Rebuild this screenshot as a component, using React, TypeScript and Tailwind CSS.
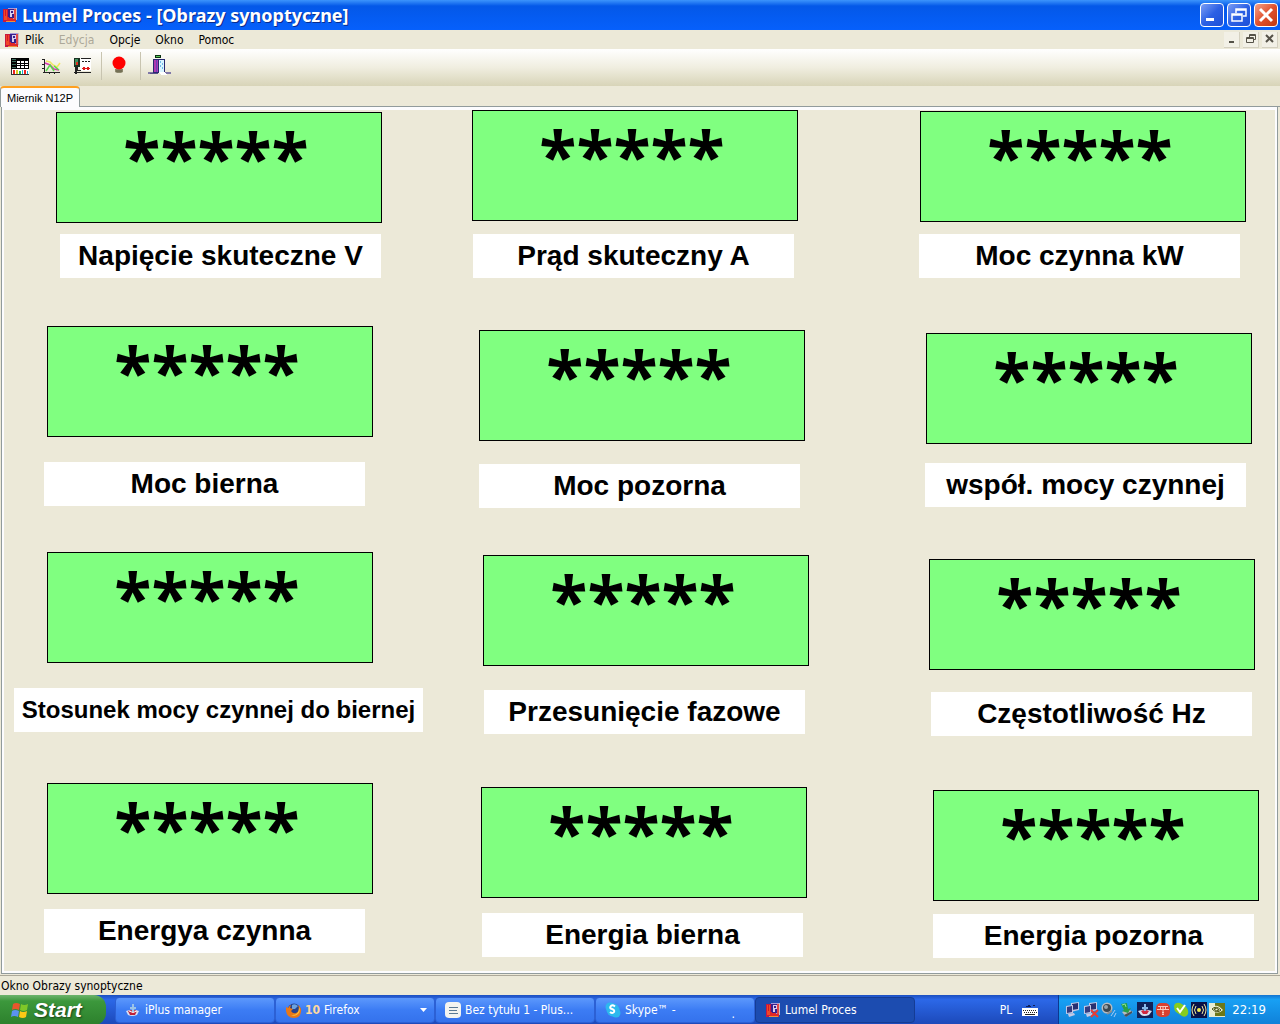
import type { ReactNode } from 'react';

interface Meter {
  id: string;
  label: string;
  box: [number, number];
  caption: [number, number];
  wide?: boolean;
}

// positions on the synoptic canvas, in pixels
const meters: Meter[] = [
  { id: 'u', label: 'Napięcie skuteczne V', box: [52, 2], caption: [56, 124] },
  { id: 'i', label: 'Prąd skuteczny A', box: [468, 0], caption: [469, 124] },
  { id: 'p', label: 'Moc czynna kW', box: [916, 1], caption: [915, 124] },
  { id: 'q', label: 'Moc bierna', box: [43, 216], caption: [40, 352] },
  { id: 's', label: 'Moc pozorna', box: [475, 220], caption: [475, 354] },
  { id: 'pf', label: 'współ. mocy czynnej', box: [922, 223], caption: [921, 353] },
  { id: 'tg', label: 'Stosunek mocy czynnej do biernej', box: [43, 442], caption: [10, 578], wide: true },
  { id: 'fi', label: 'Przesunięcie fazowe', box: [479, 445], caption: [480, 580] },
  { id: 'f', label: 'Częstotliwość Hz', box: [925, 449], caption: [927, 582] },
  { id: 'ep', label: 'Energya czynna', box: [43, 673], caption: [40, 799] },
  { id: 'eq', label: 'Energia bierna', box: [477, 677], caption: [478, 803] },
  { id: 'es', label: 'Energia pozorna', box: [929, 680], caption: [929, 804] },
];

function LumelIcon() {
  return (
    <svg width="16" height="18" viewBox="0 0 16 18" shapeRendering="crispEdges" aria-hidden="true">
      <path d="M1 3h5v13H1z" fill="#c81840" />
      <path d="M2 4h3v10H2z" fill="#f04828" />
      <path d="M3 4h1v6H3z" fill="#d01828" />
      <path d="M6 2h8v12H6z" fill="#a898d8" />
      <path d="M6 3h6v9H6z" fill="#38208c" />
      <path d="M8 4h4v4h-2v3H8z" fill="#d8d0f0" />
      <path d="M9 5h2v2H9z" fill="#38208c" />
      <path d="M5 11h2v1h4v1h3v3H5z" fill="#e02828" />
      <path d="M4 15h9v1H4z" fill="#f09038" />
      <path d="M12 3h2v10h-2z" fill="#e04848" />
      <path d="M14 2h1v12h-1z" fill="#c8c0c8" />
    </svg>
  );
}

function TableIcon() {
  return (
    <svg width="20" height="20" viewBox="0 0 20 20" shapeRendering="crispEdges">
      <path d="M1 2h18v11H1z" fill="#000" />
      <path d="M2 3h4v1H2zM2 5h4v1H2zM2 8h4v1H2zM2 11h4v1H2z" fill="#386858" />
      <path d="M7 5h3v2H7zM11 5h3v2h-3zM15 5h3v2h-3zM7 8h3v1H7zM11 8h3v1h-3zM15 8h3v1h-3zM7 10h3v2H7zM11 10h3v2h-3zM15 10h3v2h-3z" fill="#fff" />
      <path d="M1 13h18v5H1z" fill="#fff" />
      <path d="M1 13h1v5H1zM1 18h18v1H1z" fill="#333" />
      <path d="M3 14h2v4H3zM14 14h2v4h-2z" fill="#e22" />
      <path d="M6 14h2v4H6z" fill="#dc2" />
      <path d="M9 15h2v3H9z" fill="#2b4" />
      <path d="M12 14h1v4h-1zM17 15h1v3h-1z" fill="#2ac" />
    </svg>
  );
}

function ChartIcon() {
  return (
    <svg width="20" height="20" viewBox="0 0 20 20" fill="none">
      <path d="M3.500 3v14M2 16.500h17M1 3.500h2M1 8.500h2M1 12.500h2M8.500 17v1M13.500 17v1" stroke="#222" />
      <path d="M5 5l4 1 3 3 4 2 3-4" stroke="#f0e860" strokeWidth="1.500" />
      <path d="M4 7l5 2 4 4 5 1" stroke="#d838b0" strokeWidth="1.500" />
      <path d="M5 15l4-6 4 6M13 10l5 4" stroke="#58d848" strokeWidth="1.500" />
    </svg>
  );
}

function DeviceIcon() {
  return (
    <svg width="20" height="20" viewBox="0 0 20 20" shapeRendering="crispEdges">
      <path d="M2 2h6v9H2z" fill="#183020" />
      <path d="M3 3h3v6H3z" fill="#409060" />
      <path d="M4 6h2v3H4z" fill="#e03020" />
      <path d="M8 3h11v12H8z" fill="#fff" />
      <path d="M9 2h10v1H9zM10 5h2v1h-2zM13 5h2v1h-2zM16 5h2v1h-2z" fill="#222" />
      <path d="M3 11h3v3h3v1H3zM2 16h17v1H2zM3 15h2v3H3z" fill="#222" />
      <path d="M10 12h1v-1h2v1h2v-1h2v1h1v1h-1v1h-2v-1h-2v1h-2v-1h-1z" fill="#e01818" />
    </svg>
  );
}

function BulbIcon() {
  return (
    <svg width="20" height="20" viewBox="0 0 20 20">
      <path d="M5 13h8v3l-2 1H7l-2-1z" fill="#8c886c" />
      <path d="M6 15h6" stroke="#5c5840" />
      <circle cx="9" cy="7" r="6.500" fill="#f00" />
    </svg>
  );
}

function ExitIcon() {
  return (
    <svg width="24" height="22" viewBox="0 0 24 22" shapeRendering="crispEdges">
      <path d="M0 17h5v2H0zM17 17h6v2h-6z" fill="#8078a8" />
      <path d="M5 4h12v14H5z" fill="#282870" />
      <path d="M7 0h6v3H7z" fill="#0a3010" />
      <path d="M8 1h4v1H8z" fill="#58c858" />
      <path d="M6 5h4v12H6z" fill="#b038b0" />
      <path d="M8 5h1v12H8z" fill="#6840b8" />
      <path d="M11 5h5v13h-5z" fill="#d8f4ff" />
      <path d="M12 6h1v2h-1zM14 8h1v2h-1zM12 10h1v2h-1zM14 12h1v2h-1z" fill="#70b8e8" />
      <path d="M11 17h5l4 3h-7z" fill="#fff" />
      <path d="M2 18h8v1H2z" fill="#585088" />
    </svg>
  );
}

function WindowsLogo() {
  return (
    <svg width="20" height="20" viewBox="0 0 20 20" aria-hidden="true">
      <path d="M3 4q3-2 7 0l-1 6q-4-2-7 0z" fill="#e8562c" />
      <path d="M11 4q3 2 7 0l-1 6q-3 2-7 0z" fill="#7fc828" />
      <path d="M2 11q3-2 7 0l-1 6q-4-2-7 0z" fill="#5b92f0" />
      <path d="M10 11q3 2 7 0l-1 6q-3 2-7 0z" fill="#fbc816" />
    </svg>
  );
}

function PlusManagerIcon() {
  return (
    <svg width="16" height="16" viewBox="0 0 16 16" aria-hidden="true">
      <path d="M1 9q7-3 13 0l-2 4q-5 2-9 0z" fill="#d8e0f4" />
      <path d="M3 9q5-2 9 0l-2 4H5z" fill="#c02038" />
      <path d="M7 2h2v3h2v2H9v3H7V7H5V5h2z" fill="#9cc4e8" />
      <path d="M4 9q4 3 8 0" stroke="#fff" fill="none" />
    </svg>
  );
}

function FirefoxIcon() {
  return (
    <svg width="17" height="17" viewBox="0 0 17 17" aria-hidden="true">
      <circle cx="9" cy="8" r="6.500" fill="#27428c" />
      <path d="M7 3q3-2 6 1l-3 3-3 0z" fill="#6ba2e0" />
      <path d="M1 5l2 1q1-2 3-3L5 6l3 1-2 2q2 3 5 2 3-1 3-5l-1-3q4 3 3 7-1 6-7 6-7 0-8-7z" fill="#e87818" />
      <path d="M14 5q2 4-1 7-3 3-7 1 8 1 8-8z" fill="#fbc43c" />
    </svg>
  );
}

function DocumentIcon() {
  return (
    <svg width="16" height="16" viewBox="0 0 16 16" aria-hidden="true">
      <rect x="0" y="0" width="16" height="16" rx="4" fill="#f4f4f0" />
      <path d="M4 5.500h9M4 8.500h8M4 11.500h9" stroke="#5b7a94" />
    </svg>
  );
}

function SkypeIcon() {
  return (
    <svg width="16" height="16" viewBox="0 0 16 16" aria-hidden="true">
      <circle cx="5" cy="5" r="4.500" fill="#2db8ee" />
      <circle cx="11" cy="11" r="4.500" fill="#2db8ee" />
      <circle cx="8" cy="8" r="6.500" fill="#2db8ee" />
      <path d="M10 4.500Q7 2 5.500 4.500q-1 2 1.500 2.500 3 1 2 3-1.500 2-4 0" fill="none" stroke="#fff" strokeWidth="2" />
    </svg>
  );
}

function Computers({ crossed }: { crossed?: boolean }) {
  return (
    <svg width="16" height="16" viewBox="0 0 16 16" aria-hidden="true">
      <path d="M6 1l8-1v8l-8 2z" fill="#c4c8e4" />
      <path d="M7 2l6-1v6l-6 1z" fill="#283070" />
      <path d="M1 4l7-1v8l-7 1zM3 12l6-1 1 2-6 2z" fill="#c4c8e4" />
      <path d="M2 5l5-1v6l-5 1z" fill="#343c80" />
      {crossed && <path d="M8 8l7 7M15 8l-7 7" stroke="#e83c34" strokeWidth="2" />}
    </svg>
  );
}

function TrayIcons() {
  return (
    <>
      <Computers />
      <Computers crossed />
      <svg width="16" height="16" viewBox="0 0 16 16">
        <circle cx="6" cy="6" r="5.500" fill="#b8bcc0" />
        <circle cx="6" cy="6" r="4" fill="#3c4850" />
        <circle cx="5" cy="5" r="2" fill="#98a4ac" />
        <path d="M6 12l5-3" stroke="#888f94" strokeWidth="2" />
        <path d="M10 14l4-6M13 15l2-4" stroke="#a8ccf4" />
      </svg>
      <svg width="16" height="16" viewBox="0 0 16 16">
        <path d="M3 10l6-3 5 3-7 5z" fill="#b8bcc0" />
        <path d="M5 13l8-4v2l-6 4z" fill="#485058" />
        <path d="M2 2l6-1 1 6 3-1-3 5-6-2 2-1z" fill="#28a048" />
        <path d="M3 3l3-1 1 3" stroke="#90e090" fill="none" />
      </svg>
      <svg width="16" height="16" viewBox="0 0 16 16">
        <path d="M0 0h16v16H0z" fill="#102058" />
        <path d="M1 9q7-3 14 0l-3 4q-5 2-8 0z" fill="#d8e0f0" />
        <path d="M4 9q4-2 8 0l-2 3H6z" fill="#d02840" />
        <path d="M7 2h2v3h2v2H9v2H7V7H5V5h2z" fill="#88b8e8" />
      </svg>
      <svg width="16" height="16" viewBox="0 0 16 16">
        <rect x="1" y="1" width="14" height="14" rx="5" fill="#d84030" />
        <path d="M3 4.500h10M2 7.500h12M7 10.500h2M7 12.500h2M5.500 4v4M8 4v9M10.500 4v4" stroke="#f8c8bc" />
      </svg>
      <svg width="16" height="16" viewBox="0 0 16 16">
        <path d="M1 4q1-4 6-3l5 3q4 3 3 8-2 4-6 2L3 10Q1 8 1 4z" fill="#88cc20" />
        <path d="M4 6l3 4 5-7" stroke="#fff" strokeWidth="2" fill="none" />
      </svg>
      <svg width="16" height="16" viewBox="0 0 16 16">
        <path d="M0 0h16v16H0z" fill="#081048" />
        <circle cx="8" cy="8" r="2" fill="#f4ec50" />
        <path d="M5 4Q2 8 5 12M11 4q3 4 0 8M3 2q-4 6 0 12M13 2q4 6 0 12" stroke="#f0e8a0" fill="none" />
      </svg>
      <svg width="16" height="16" viewBox="0 0 16 16">
        <path d="M0 1h16v14H0z" fill="#e8ecd0" />
        <path d="M6 1h10v13H6z" fill="#6c7818" />
        <path d="M1 7q6-7 13 1-6 6-13-1z" fill="#f0f4d8" />
        <path d="M3 7q4-4 9 1-4 4-9-1zM5 7q3-2 5 1-3 2-5-1z" fill="none" stroke="#485010" />
      </svg>
    </>
  );
}

const glyphs: Record<string, ReactNode> = {
  min: <path d="M2 12.500h8" strokeWidth="3" />,
  restore: <path d="M5 6V2h10v7h-3M5 3h10M1 8h10M1 7h10v7H1z" />,
  close: <path d="M2 2l12 12M14 2L2 14" strokeWidth="3" />,
};

function CaptionButton({ kind, label }: { kind: string; label: string }) {
  return (
    <button
      aria-label={label}
      className={`w-6 h-6 rounded border border-white flex items-center justify-center ${
        kind === 'close'
          ? 'bg-linear-to-br from-[#f0a088] via-[#e0502c] to-[#c03810]'
          : 'bg-linear-to-br from-[#7c9cf4] via-[#2c60e4] to-[#1c50d8]'
      }`}
    >
      <svg width="16" height="16" viewBox="0 0 16 16" fill="none" stroke="#fff" strokeWidth="1.500">{glyphs[kind]}</svg>
    </button>
  );
}

function ChildButton({ label, children }: { label: string; children: ReactNode }) {
  return (
    <button aria-label={label} className="w-4 h-4 bg-[#f2f0e6] border-r border-b border-[#d4d0c0] flex items-center justify-center">
      <svg width="12" height="12" viewBox="0 0 12 12" fill="none" stroke="#555248">{children}</svg>
    </button>
  );
}

function Task({ icon, active, children }: { icon: ReactNode; active?: boolean; children: ReactNode }) {
  return (
    <button
      className={`flex-1 min-w-0 max-w-40 h-[26px] px-[7px] flex items-center gap-0.5 rounded-sm border text-left whitespace-nowrap ${
        active
          ? 'bg-[#1c4cb0] border-[#153c94]'
          : 'bg-linear-to-b from-[#5c98fc] via-[#3c7cf4] to-[#3472ec] border-[#2c60d4]'
      }`}
    >
      <span className="shrink-0 w-5 flex justify-center">{icon}</span>
      {children}
    </button>
  );
}

export default function App() {
  return (
    <div className="min-h-screen flex flex-col bg-[#ece9d8] text-black text-[12px] leading-4 font-['DejaVu_Sans_Condensed','Noto_Sans',sans-serif]">
      {/* Title bar */}
      <header className="h-[30px] shrink-0 flex items-center gap-1 pl-0.5 pr-0.5 bg-linear-to-b from-[#3c94fc] via-[#0458e8] via-20% to-[#0660fc]">
        <LumelIcon />
        <h1 className="flex-1 text-white text-[18px] leading-6 font-bold font-['Noto_Sans',sans-serif] [text-shadow:1px_1px_#0a2c8c]">
          Lumel Proces - [Obrazy synoptyczne]
        </h1>
        <div className="flex gap-[3px]">
          <CaptionButton kind="min" label="Minimalizuj" />
          <CaptionButton kind="restore" label="Przywróć" />
          <CaptionButton kind="close" label="Zamknij" />
        </div>
      </header>

      {/* Menu */}
      <nav className="h-[19px] shrink-0 flex items-center pl-1 pr-0.5">
        <LumelIcon />
        <div className="flex-1 flex gap-[15px] pl-[5px]">
          <button>Plik</button>
          <button disabled className="text-[#aca899]">Edycja</button>
          <button>Opcje</button>
          <button>Okno</button>
          <button>Pomoc</button>
        </div>
        <div className="flex gap-[3px]">
          <ChildButton label="Minimalizuj okno"><path d="M3 9h5" strokeWidth="2" /></ChildButton>
          <ChildButton label="Przywróć okno"><path d="M4.500 4V1.500h6v5H9M4 2.500h6M1.500 4.500h7v5h-7zM1 5.500h7" /></ChildButton>
          <ChildButton label="Zamknij okno"><path d="M2 2l7 7M9 2L2 9" strokeWidth="2" /></ChildButton>
        </div>
      </nav>

      {/* Toolbar */}
      <div className="h-[37px] shrink-0 flex items-center pl-[10px] pb-1 bg-linear-to-b from-white via-[#f0eee0] to-[#d8d4b8]">
        <div className="flex gap-[11px] pr-[9px]">
          <button aria-label="Tabela"><TableIcon /></button>
          <button aria-label="Wykres"><ChartIcon /></button>
          <button aria-label="Urządzenia"><DeviceIcon /></button>
        </div>
        <div className="h-7 border-l border-[#c8c4b0] pl-2 pr-[10px] flex items-center">
          <button aria-label="Alarm"><BulbIcon /></button>
        </div>
        <div className="h-7 border-l border-[#c8c4b0] px-[7px] flex items-center">
          <button aria-label="Wyjście"><ExitIcon /></button>
        </div>
      </div>

      {/* Tabs */}
      <div className="h-[21px] shrink-0 flex items-stretch">
        <button className="w-20 border-x border-[#919b9c] border-t-2 border-t-[#ffa020] rounded-t-sm bg-[#fcfcfe] text-[11px] whitespace-nowrap font-['Liberation_Sans',sans-serif]">
          Miernik N12P
        </button>
        <div className="flex-1 border-b border-[#919b9c]" />
      </div>

      {/* Synoptic canvas */}
      <main className="flex-1 flex ml-px mr-0.5 border-l border-r border-b border-[#919b9c]">
        <div className="relative flex-1 min-h-[866px] border-l-2 border-t-3 border-r-2 border-b-2 border-[#fcfcfe] overflow-hidden font-['Liberation_Sans',Arial,sans-serif] font-bold text-center">
          {meters.map(m => (
            <div key={m.id}>
              <output
                aria-labelledby={m.id}
                className="absolute w-[326px] h-[111px] bg-[#80ff80] border border-black text-[68px] leading-[88px] pr-1.5 font-['Open_Sans',sans-serif]"
                style={{ left: m.box[0], top: m.box[1] }}
              >
                *****
              </output>
              <p
                id={m.id}
                className={`absolute h-11 leading-11 bg-white whitespace-nowrap ${m.wide ? 'w-[409px] text-[24px]' : 'w-[321px] text-[28px]'}`}
                style={{ left: m.caption[0], top: m.caption[1] }}
              >
                {m.label}
              </p>
            </div>
          ))}
        </div>
      </main>

      {/* Status bar */}
      <div className="h-5 shrink-0 mt-px pt-0.5 pl-px border-t border-[#aca899]">Okno Obrazy synoptyczne</div>

      {/* Taskbar */}
      <footer className="h-[30px] shrink-0 flex items-stretch text-white bg-linear-to-b from-[#1c50c0] via-[#2c68e8] via-15% to-[#1c48b8]">
        <button className="w-[106px] pl-[10px] flex items-center gap-1 rounded-r-xl bg-linear-to-b from-[#6cb46c] via-[#3c983c] via-20% to-[#2c802c] text-[21px] leading-6 font-bold italic font-['Liberation_Sans',sans-serif] [text-shadow:1px_1px_2px_#184018]">
          <WindowsLogo />
          Start
        </button>
        <div className="flex-1 min-w-0 flex items-center pl-[9px]">
          <Task icon={<PlusManagerIcon />}>iPlus manager</Task>
          <Task icon={<FirefoxIcon />}>
            <b className="text-[#fcd8a0] pr-0.5">10</b>
            <span className="flex-1">Firefox</span>
            <svg width="7" height="4" viewBox="0 0 7 4"><path d="M0 0h7L3.500 4z" fill="#fff" /></svg>
          </Task>
          <Task icon={<DocumentIcon />}>Bez tytułu 1 - Plus...</Task>
          <Task icon={<SkypeIcon />}>
            <span className="flex-1">Skype™ -</span>
            <span className="pr-3 pt-2">.</span>
          </Task>
          <Task icon={<LumelIcon />} active>Lumel Proces</Task>
        </div>
        <div className="flex items-center gap-[10px] pr-5">
          <span>PL</span>
          <svg width="16" height="14" viewBox="0 0 16 14" shapeRendering="crispEdges">
            <path d="M4 3h2V2h2v1h3V2h2v1H9v1H4z" fill="#102058" />
            <path d="M0 5h16v8H0z" fill="#fff" />
            <path d="M1 7.500h14M2 9.500h13" stroke="#222" strokeDasharray="1 1" />
            <path d="M3 11h10v1H3z" fill="#222" />
          </svg>
        </div>
        <div className="flex items-center gap-0.5 pl-[6px] pr-[14px] border-l border-[#0c3890] bg-linear-to-b from-[#1474d0] via-[#18a0f4] via-15% to-[#1080d8]">
          <TrayIcons />
          <time className="pl-[5px] text-[13px]">22:19</time>
        </div>
      </footer>
    </div>
  );
}
